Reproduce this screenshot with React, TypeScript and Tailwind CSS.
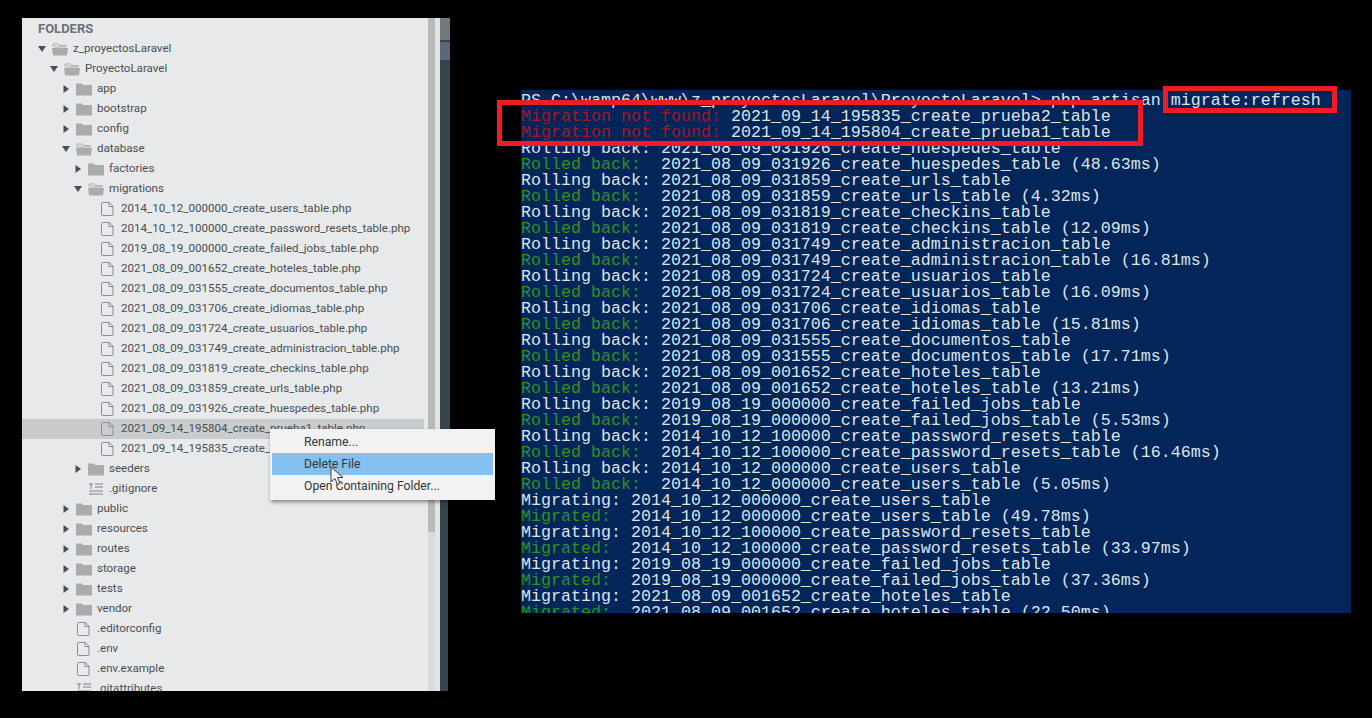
const tree: any[] = [
  { d: 0, t: "z_proyectosLaravel", k: "open" },
  { d: 1, t: "ProyectoLaravel", k: "open" },
  { d: 2, t: "app", k: "closed" },
  { d: 2, t: "bootstrap", k: "closed" },
  { d: 2, t: "config", k: "closed" },
  { d: 2, t: "database", k: "open" },
  { d: 3, t: "factories", k: "closed" },
  { d: 3, t: "migrations", k: "open" },
  { d: 4, t: "2014_10_12_000000_create_users_table.php", k: "file" },
  { d: 4, t: "2014_10_12_100000_create_password_resets_table.php", k: "file" },
  { d: 4, t: "2019_08_19_000000_create_failed_jobs_table.php", k: "file" },
  { d: 4, t: "2021_08_09_001652_create_hoteles_table.php", k: "file" },
  { d: 4, t: "2021_08_09_031555_create_documentos_table.php", k: "file" },
  { d: 4, t: "2021_08_09_031706_create_idiomas_table.php", k: "file" },
  { d: 4, t: "2021_08_09_031724_create_usuarios_table.php", k: "file" },
  { d: 4, t: "2021_08_09_031749_create_administracion_table.php", k: "file" },
  { d: 4, t: "2021_08_09_031819_create_checkins_table.php", k: "file" },
  { d: 4, t: "2021_08_09_031859_create_urls_table.php", k: "file" },
  { d: 4, t: "2021_08_09_031926_create_huespedes_table.php", k: "file" },
  { d: 4, t: "2021_09_14_195804_create_prueba1_table.php", k: "file", sel: true },
  { d: 4, t: "2021_09_14_195835_create_prueba2_table.php", k: "file" },
  { d: 3, t: "seeders", k: "closed" },
  { d: 3, t: ".gitignore", k: "lines" },
  { d: 2, t: "public", k: "closed" },
  { d: 2, t: "resources", k: "closed" },
  { d: 2, t: "routes", k: "closed" },
  { d: 2, t: "storage", k: "closed" },
  { d: 2, t: "tests", k: "closed" },
  { d: 2, t: "vendor", k: "closed" },
  { d: 2, t: ".editorconfig", k: "file" },
  { d: 2, t: ".env", k: "file" },
  { d: 2, t: ".env.example", k: "file" },
  { d: 2, t: ".gitattributes", k: "lines" },
];

const indent = ["pl-[16px]", "pl-[28px]", "pl-[40px]", "pl-[52px]", "pl-[64px]"];

const pairs: [string, string][] = [
  ["2021_08_09_031926_create_huespedes_table", "48.63"],
  ["2021_08_09_031859_create_urls_table", "4.32"],
  ["2021_08_09_031819_create_checkins_table", "12.09"],
  ["2021_08_09_031749_create_administracion_table", "16.81"],
  ["2021_08_09_031724_create_usuarios_table", "16.09"],
  ["2021_08_09_031706_create_idiomas_table", "15.81"],
  ["2021_08_09_031555_create_documentos_table", "17.71"],
  ["2021_08_09_001652_create_hoteles_table", "13.21"],
  ["2019_08_19_000000_create_failed_jobs_table", "5.53"],
  ["2014_10_12_100000_create_password_resets_table", "16.46"],
  ["2014_10_12_000000_create_users_table", "5.05"],
];

const migrated: [string, string][] = [
  ["2014_10_12_000000_create_users_table", "49.78"],
  ["2014_10_12_100000_create_password_resets_table", "33.97"],
  ["2019_08_19_000000_create_failed_jobs_table", "37.36"],
  ["2021_08_09_001652_create_hoteles_table", "22.50"],
];

function Arrow({ open }: { open: boolean }) {
  return (
    <svg width="8" height="10" viewBox="0 0 8 10" className="shrink-0">
      {open ? <path d="M0 2h8L4 8z" fill="#4a4f54" /> : <path d="M1.500 1v8L7 5z" fill="#4a4f54" />}
    </svg>
  );
}

function Icon({ kind }: { kind: string }) {
  if (kind === "closed") {
    return (
      <svg width="16" height="14" viewBox="0 0 16 14" className="shrink-0">
        <path d="M0 1.500h6l1 1.500h9v10.500H0z" fill="#a9abad" />
      </svg>
    );
  }
  if (kind === "open") {
    return (
      <svg width="16" height="14" viewBox="0 0 16 14" className="shrink-0">
        <path d="M1 4V2h5l1 1.500h7V5H4z" fill="none" stroke="#a9abad" strokeWidth="1" />
        <path d="M0 6h16l-1 7.500H1z" fill="#a9abad" />
      </svg>
    );
  }
  if (kind === "lines") {
    return (
      <svg width="16" height="14" viewBox="0 0 16 14" className="shrink-0">
        <path d="M1 2h4M3 2v5M7 2h8M7 5h8M1 9h14M1 12h14" stroke="#7c8084" strokeWidth="1" fill="none" />
      </svg>
    );
  }
  return (
    <svg width="16" height="14" viewBox="0 0 16 14" className="shrink-0">
      <path d="M2.500.500h7l3.500 3.500v8.500a1 1 0 0 1-1 1h-9.500a1 1 0 0 1-1-1v-11a1 1 0 0 1 1-1z M9 .500v4h4" fill="none" stroke="#8b8f93" strokeWidth="1" />
    </svg>
  );
}

function Row({ item }: { item: any }) {
  const folder = item.k === "open" || item.k === "closed";
  return (
    <div className={`h-5 flex items-center shrink-0 ${indent[item.d]} ${item.sel ? "bg-[#c9cbcd]" : ""}`}>
      <div className="w-[8px] shrink-0">{folder && <Arrow open={item.k === "open"} />}</div>
      <div className="ml-[6px] shrink-0">
        <Icon kind={item.k} />
      </div>
      <span className="ml-[5px] whitespace-nowrap text-[11.55px] text-[#4a4f54]">{item.t}</span>
    </div>
  );
}

function Line({ color, label, text }: { color: string; label: string; text: string }) {
  return (
    <div className="h-4 leading-4 whitespace-pre">
      <span className={color}>{label}</span>
      {text}
    </div>
  );
}

export default function App() {
  return (
    <div className="relative w-[1372px] h-[718px] bg-black overflow-hidden flex items-start pt-[18px] pl-[22px] font-['Roboto',sans-serif]">
      {/* sublime sidebar */}
      <div className="w-[428px] h-[673px] shrink-0 flex bg-[#e7e9ea] overflow-hidden">
        <div className="w-[402px] shrink-0 flex flex-col">
          <div className="h-[21px] shrink-0 pl-[16px] flex items-center text-[13px] font-bold text-[#6c7176]">FOLDERS</div>
          {tree.map((item, i) => (
            <Row key={i} item={item} />
          ))}
        </div>
        <div className="w-[4px] shrink-0" />
        <div className="w-[7px] shrink-0 self-stretch flex flex-col bg-[#d8dadb]">
          <div className="h-[514px] bg-[#b9bbbb]" />
        </div>
        <div className="w-[5px] shrink-0 self-stretch bg-[#e2e4e5]" />
        <div className="w-[10px] shrink-0 self-stretch flex flex-col bg-[#37444c]">
          <div className="h-[22px] bg-[#73777e]" />
          <div className="h-[2px] bg-[#3a4048]" />
          <div className="h-[18px] bg-[#5b6877]" />
          <div className="mt-auto h-[191px] border-r-2 border-black" />
        </div>
      </div>

      {/* powershell */}
      <div className="ml-[71px] mt-[72px] w-[830px] h-[523px] shrink-0 bg-[#03265a] overflow-hidden pt-[3px] text-[16.67px] text-[#dfe3e8] font-['Liberation_Mono',monospace]">
        <div className="h-4 leading-4 whitespace-pre">PS C:\wamp64\www\z_proyectosLaravel\ProyectoLaravel&gt; php artisan migrate:refresh</div>
        <Line color="text-[#a3142f]" label="Migration not found: " text="2021_09_14_195835_create_prueba2_table" />
        <Line color="text-[#a3142f]" label="Migration not found: " text="2021_09_14_195804_create_prueba1_table" />
        {pairs.map(([name, ms]) => (
          <div key={name}>
            <Line color="" label="Rolling back: " text={name} />
            <Line color="text-[#2f8f25]" label="Rolled back:  " text={`${name} (${ms}ms)`} />
          </div>
        ))}
        {migrated.map(([name, ms]) => (
          <div key={name}>
            <Line color="" label="Migrating: " text={name} />
            <Line color="text-[#2f8f25]" label="Migrated:  " text={`${name} (${ms}ms)`} />
          </div>
        ))}
      </div>

      {/* red annotations */}
      <div className="absolute left-[497px] top-[100px] w-[646px] h-[46px] border-[5px] border-[#ee1c25]" />
      <div className="absolute left-[1163px] top-[86px] w-[174px] h-[27px] border-[5px] border-[#ee1c25]" />

      {/* context menu */}
      <div className="absolute left-[270px] top-[429px] w-[225px] h-[71px] bg-[#f2f2f2] shadow-[1px_2px_4px_rgba(0,0,0,0.45)] px-[2px] pt-[2px] text-[12.2px] text-[#33383d]">
        <div className="h-[22px] flex items-center pl-[32px]">Rename...</div>
        <div className="h-[22px] flex items-center pl-[32px] bg-[#84bfee]">Delete File</div>
        <div className="h-[22px] flex items-center pl-[32px]">Open Containing Folder...</div>
      </div>
      <svg className="absolute left-[330px] top-[466px]" width="16" height="21" viewBox="0 0 16 21">
        <path d="M1 1v15l4-3.500 2.500 6 2.500-1-2.500-6h5.500z" fill="#f4f4f4" stroke="#3a4048" strokeWidth="1" />
      </svg>
    </div>
  );
}
